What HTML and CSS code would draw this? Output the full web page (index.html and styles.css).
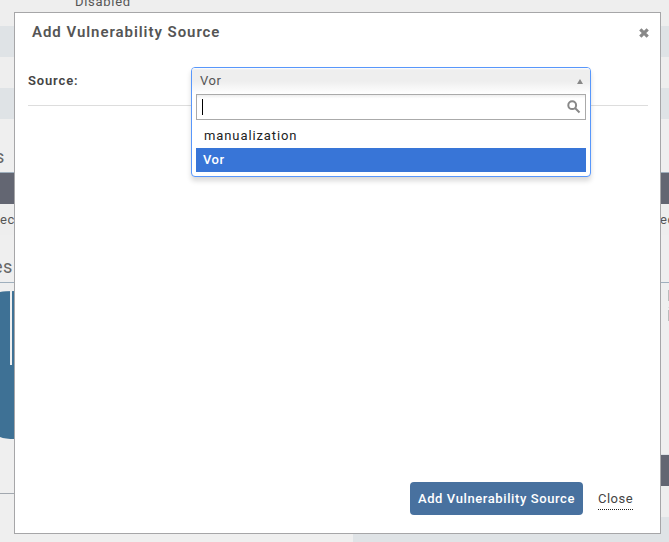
FILE: index.html
```html
<!DOCTYPE html>
<html lang="en">
<head>
<meta charset="utf-8">
<title>Add Vulnerability Source</title>
<link rel="stylesheet" href="styles.css">
</head>
<body>
<div class="page">
  <section class="column">
    <div class="row first"><span class="disabled">Disabled</span></div>
    <div class="row alt"></div>
    <div class="row"></div>
    <div class="row alt"></div>
    <h3 class="heading">s</h3>
    <div class="bar"></div>
    <div class="row record">ec</div>
    <h3 class="heading second">es</h3>
    <div class="chart"><svg width="15" height="148" viewBox="0 0 15 148"><path class="disc" d="M0 1Q5 0 15 0V148Q5 148 0 146Z"/><path class="slice" d="M10 0h2v74h-2z"/></svg></div>
    <div class="rule"></div>
  </section>
  <section class="column">
    <div class="row first"></div>
    <div class="row alt"></div>
    <div class="row"></div>
    <div class="row alt"></div>
    <div class="heading"></div>
    <div class="bar"></div>
    <div class="row record right">ec</div>
    <div class="heading second"></div>
    <div class="legend"><i></i><b></b><i></i></div>
    <div class="bar"></div>
    <div class="row"></div>
    <div class="row alt"></div>
  </section>
</div>
<div class="dialog" role="dialog">
  <header class="titlebar">
    <h2 class="title">Add Vulnerability Source</h2>
    <svg class="close-icon" width="10" height="10" viewBox="0 0 10 10"><path d="M1.3 1.3L8.7 8.7M8.7 1.3L1.3 8.7"/></svg>
  </header>
  <div class="field">
    <span class="label">Source:</span>
    <div class="select">
      <div class="choice"><span>Vor</span><i class="arrow"></i></div>
      <div class="search"><i class="caret"></i><svg width="14" height="14" viewBox="0 0 14 14"><circle cx="5.2" cy="5.2" r="3.9"/><path d="M8 8l4.5 4.5"/></svg></div>
      <div class="option">manualization</div>
      <div class="option active">Vor</div>
    </div>
  </div>
  <footer class="actions">
    <button class="primary">Add Vulnerability Source</button>
    <a class="close">Close</a>
  </footer>
</div>
</body>
</html>
```
FILE: styles.css
```css
* { box-sizing: border-box; }
body { margin: 0; width: 669px; height: 542px; overflow: hidden; background: #efefef; color: #555; font: 13px Roboto, "Liberation Sans", sans-serif; letter-spacing: .5px; }
.page { display: grid; grid-template-columns: 353px 316px; height: 542px; overflow: hidden; }
.row { height: 31px; background: #eee; }
.row.first { height: 26px; overflow: hidden; }
.row.alt { background: #dfe3e6; }
.disabled { display: block; padding-left: 75px; line-height: 16px; height: 16px; letter-spacing: .7px; transform: translateY(-6px); }
.heading { margin: 0; height: 54px; padding-top: 27px; border-bottom: 1px solid #9fafbd; font-size: 18px; line-height: 22px; font-weight: 400; color: #666; text-indent: -5px; }
.heading.second { height: 48px; padding-top: 21px; text-indent: -7px; }
.bar { height: 31px; background: #636672; }
.record { line-height: 31px; }
.record.right { padding-left: 307px; white-space: nowrap; overflow: hidden; }
.chart { height: 210px; padding-top: 8px; }
.chart svg { display: block; }
.disc { fill: #3e7195; }
.slice { fill: #efefef; }
.rule { height: 1px; background: #a2a8af; }
.legend { height: 172px; padding-top: 7px; border-bottom: 1px solid #dce0e4; }
.legend i, .legend b { display: block; width: 1px; height: 11px; margin-left: 315px; background: #bbb; }
.legend b { height: 1px; margin-top: 6px; margin-bottom: 2px; background: #ddd; }
.dialog { position: absolute; left: 14px; top: 12px; width: 647px; height: 522px; background: #fff; border: 1px solid #a6a6a8; display: flex; flex-direction: column; }
.titlebar { height: 54px; padding: 9px 11px 0 17px; display: flex; justify-content: space-between; }
.title { margin: 0; font-size: 15px; line-height: 20px; font-weight: 600; letter-spacing: .95px; color: #555; }
.close-icon { margin-top: 6px; }
.close-icon path { stroke: #888; stroke-width: 3.2; fill: none; }
.field { height: 39px; margin: 0 12px 0 13px; border-bottom: 1px solid #ddd; display: flex; }
.label { width: 163px; padding-top: 5px; line-height: 18px; font-weight: 600; letter-spacing: .85px; color: #444; }
.select { width: 400px; height: 110px; flex: none; border: 1px solid #5897fb; border-radius: 4px; background: #fff; box-shadow: 0 4px 5px rgba(0, 0, 0, .15); padding: 0 4px; }
.choice { height: 26px; margin: 0 -4px; padding: 0 7px 0 8px; border-radius: 3px 3px 0 0; display: flex; align-items: center; justify-content: space-between; background: linear-gradient(#fff 0, #eee 2px, #eee 50%, #fff 100%); }
.choice span { line-height: 26px; height: 27px; }
.arrow { border: 3px solid transparent; border-bottom: 5px solid #888; border-top: 0; margin-top: 1px; }
.search { height: 26px; border: 1px solid #aaa; background: linear-gradient(#eee, #fff 15%); display: flex; align-items: center; justify-content: space-between; padding: 0 4px 0 5px; margin-bottom: 4px; }
.search svg { fill: none; stroke: #888; stroke-width: 2; }
.caret { width: 1px; height: 16px; background: #000; }
.option { height: 24px; line-height: 23px; padding-left: 8px; color: #222; letter-spacing: .9px; }
.option.active { padding-left: 7px; background: #3875d7; color: #fff; font-weight: 500; letter-spacing: .5px; }
.actions { margin-top: auto; display: flex; justify-content: flex-end; align-items: center; gap: 15px; padding: 0 27px 18px 0; }
.primary { width: 173px; height: 33px; border: 0; border-radius: 4px; padding: 0; background: #48719f; color: #fff; font: 500 13px Roboto, sans-serif; letter-spacing: .6px; white-space: nowrap; }
.close { width: 35px; line-height: 20px; margin-top: 1px; border-bottom: 1px dotted #222; color: #444; letter-spacing: .5px; white-space: nowrap; }
```
